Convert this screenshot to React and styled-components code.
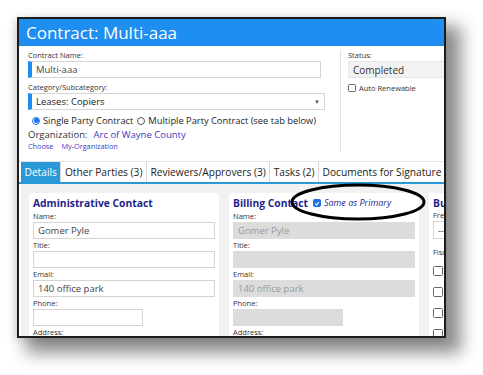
import React from "react";
import styled, { createGlobalStyle } from "styled-components";

const Global = createGlobalStyle`
  html, body { margin: 0; padding: 0; background: #fff; }
  body { font-family: "Open Sans", "Noto Sans", sans-serif; }
`;

const Page = styled.div`
  width: 483px;
  height: 375px;
  padding: 17px 0 0 17px;
  box-sizing: border-box;
  overflow: hidden;
`;

const Frame = styled.div`
  position: relative;
  width: 429px;
  height: 321px;
  box-sizing: border-box;
  border: 2px solid #1c1c1c;
  background: #fff;
  overflow: hidden;
  box-shadow: 12px 12px 16px 3px rgba(0, 0, 0, 0.45), -3px 2px 8px rgba(0, 0, 0, 0.12);
`;

const Inner = styled.div`
  width: 520px;
`;

const Header = styled.div`
  height: 27px;
  background: #1e8ef0;
  color: #fff;
  font-size: 17px;
  line-height: 27px;
  padding-left: 7px;
`;

const Top = styled.div`
  display: flex;
  height: 108px;
  padding-top: 4px;
  box-sizing: border-box;
`;

const MainCol = styled.div`
  width: 297px;
  padding-left: 9px;
  padding-right: 15px;
  border-right: 1px solid #e2e2e2;
  margin-bottom: 2px;
`;

const SideCol = styled.div`
  padding-left: 7px;
  flex: 1;
`;

const Label = styled.div`
  font-size: 7.5px;
  color: #333;
  line-height: 10px;
  margin-top: ${(p) => p.$mt || 0}px;
`;

const Field = styled.div`
  height: ${(p) => p.$h || 17}px;
  box-sizing: border-box;
  width: ${(p) => p.$w || "100%"};
  border: 1px solid ${(p) => (p.$disabled ? "#dcdcdc" : "#d4d4d4")};
  border-left: ${(p) => (p.$accent ? "4px solid #1e8ef0" : undefined)};
  background: ${(p) => (p.$disabled ? "#dcdcdc" : "#fff")};
  color: ${(p) => (p.$disabled ? "#9a9a9a" : p.$dark ? "#222" : "#444")};
  font-size: 9.5px;
  padding-left: 4px;
  margin-top: 1px;
  display: flex;
  align-items: center;
  justify-content: space-between;
`;

const StatusBox = styled(Field)`
  background: #f2f2f2;
  border-color: #e6e6e6;
  color: #333;
  font-size: 10px;
`;

const Caret = styled.span`
  font-size: 6px;
  color: #555;
  margin-right: 4px;
`;

const RadioRow = styled.div`
  display: flex;
  align-items: center;
  gap: 3px;
  margin-top: 4px;
  font-size: 9.3px;
  color: #222;
`;

const Radio = styled.span`
  width: 8px;
  height: 8px;
  border-radius: 50%;
  box-sizing: border-box;
  border: 1px solid ${(p) => (p.$on ? "#1a73e8" : "#555")};
  display: inline-flex;
  align-items: center;
  justify-content: center;
  margin-left: ${(p) => p.$ml || 0}px;
  &::after {
    content: "";
    width: 5px;
    height: 5px;
    border-radius: 50%;
    background: ${(p) => (p.$on ? "#1a73e8" : "transparent")};
  }
`;

const OrgRow = styled.div`
  font-size: 9.5px;
  color: #333;
  margin-top: 1px;
  span { color: #3b3bbf; margin-left: 6px; }
`;

const Links = styled.div`
  font-size: 7.3px;
  color: #3b3bbf;
  span { margin-right: 8px; }
`;

const Check = styled.span`
  width: ${(p) => p.$size || 8}px;
  height: ${(p) => p.$size || 8}px;
  box-sizing: border-box;
  border: 1px solid ${(p) => (p.$on ? "#1a73e8" : "#666")};
  border-radius: 1.5px;
  background: ${(p) => (p.$on ? "#1a73e8" : "#fff")};
  display: inline-flex;
  align-items: center;
  justify-content: center;
  flex: none;
`;

const CheckRow = styled.div`
  display: flex;
  align-items: center;
  gap: 3px;
  margin-top: 5px;
  font-size: 7.5px;
  color: #333;
`;

const Tabs = styled.div`
  display: flex;
  border-top: 1px solid #e4e4e4;
  border-bottom: 2px solid #2a9ad6;
  margin-top: 7px;
  padding-left: 2px;
`;

const Tab = styled.div`
  height: 20px;
  line-height: 20px;
  padding: 0 3.5px;
  font-size: 10.2px;
  color: ${(p) => (p.$active ? "#fff" : "#222")};
  background: ${(p) => (p.$active ? "#2a9ad6" : "#fff")};
  border-right: 1px solid #d8d8d8;
  white-space: nowrap;
`;

const Body = styled.div`
  background: #f1f1f1;
  display: flex;
  gap: 10px;
  padding: 9px 0 0 8px;
  margin-left: 2px;
  height: 160px;
`;

const Panel = styled.div`
  background: #fff;
  width: ${(p) => p.$w}px;
  padding: 3px 4px 0 4px;
  box-sizing: border-box;
  flex: none;
`;

const Title = styled.div`
  display: flex;
  align-items: center;
  gap: 5px;
  font-size: 10.3px;
  font-weight: 700;
  color: #1f1f8c;
  line-height: 14px;
  white-space: nowrap;
`;

const Same = styled.span`
  font-size: 9px;
  font-weight: 400;
  font-style: italic;
  color: #2a2a8c;
  margin-left: -2px;
`;

const PanelLabel = styled(Label)`
  margin-top: 2px;
  line-height: 9px;
`;

const BoxCol = styled.div`
  display: flex;
  flex-direction: column;
  gap: 11px;
  margin-top: 9px;
`;

const Oval = styled.svg`
  position: absolute;
  left: 269px;
  top: 163px;
  pointer-events: none;
`;

const Tick = () => (
  <svg width="7" height="7" viewBox="0 0 10 10">
    <path d="M2 5.2 L4.2 7.4 L8.2 2.6" fill="none" stroke="#fff" strokeWidth="1.8" />
  </svg>
);

function ContactFields({ disabled, name, email }) {
  return (
    <>
      <PanelLabel>Name:</PanelLabel>
      <Field $disabled={disabled}>{name}</Field>
      <PanelLabel>Title:</PanelLabel>
      <Field $disabled={disabled} />
      <PanelLabel>Email:</PanelLabel>
      <Field $disabled={disabled}>{email}</Field>
      <PanelLabel>Phone:</PanelLabel>
      <Field $disabled={disabled} $w="110px" />
      <PanelLabel>Address:</PanelLabel>
    </>
  );
}

export default function App() {
  return (
    <>
      <Global />
      <Page>
        <Frame>
          <Inner>
            <Header>Contract: Multi-aaa</Header>
            <Top>
              <MainCol>
                <Label>Contract Name:</Label>
                <Field $accent $w="293px">Multi-aaa</Field>
                <Label $mt={4}>Category/Subcategory:</Label>
                <Field $accent $dark>
                  Leases: Copiers
                  <Caret>▼</Caret>
                </Field>
                <RadioRow>
                  <Radio $on $ml={4} />
                  Single Party Contract
                  <Radio $ml={1} />
                  Multiple Party Contract (see tab below)
                </RadioRow>
                <OrgRow>
                  Organization:<span>Arc of Wayne County</span>
                </OrgRow>
                <Links>
                  <span>Choose</span>
                  <span>My-Organization</span>
                </Links>
              </MainCol>
              <SideCol>
                <Label>Status:</Label>
                <StatusBox>Completed</StatusBox>
                <CheckRow>
                  <Check />
                  Auto Renewable
                </CheckRow>
              </SideCol>
            </Top>
            <Tabs>
              <Tab $active>Details</Tab>
              <Tab>Other Parties (3)</Tab>
              <Tab>Reviewers/Approvers (3)</Tab>
              <Tab>Tasks (2)</Tab>
              <Tab>Documents for Signature</Tab>
            </Tabs>
            <Body>
              <Panel $w={190}>
                <Title>Administrative Contact</Title>
                <ContactFields name="Gomer Pyle" email="140 office park" />
              </Panel>
              <Panel $w={190}>
                <Title>
                  Billing Contact
                  <Check $on>
                    <Tick />
                  </Check>
                  <Same>Same as Primary</Same>
                </Title>
                <ContactFields disabled name="Gomer Pyle" email="140 office park" />
              </Panel>
              <Panel $w={80}>
                <Title>Bu</Title>
                <Label>Frequency</Label>
                <Field $w="40px" $h={18}>--S</Field>
                <Label $mt={8}>Fiscal</Label>
                <BoxCol>
                  <Check $size={10} />
                  <Check $size={10} />
                  <Check $size={10} />
                  <Check $size={10} />
                </BoxCol>
              </Panel>
            </Body>
          </Inner>
          <Oval width="140" height="42" viewBox="0 0 140 42">
            <ellipse cx="70" cy="20" rx="66" ry="17" fill="none" stroke="#000" strokeWidth="3" />
          </Oval>
        </Frame>
      </Page>
    </>
  );
}
